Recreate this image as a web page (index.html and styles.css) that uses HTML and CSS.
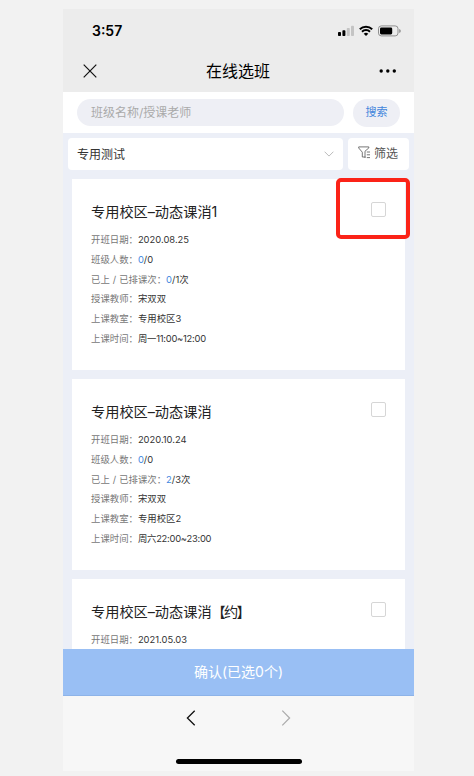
FILE: index.html
```
<!DOCTYPE html>
<html lang="zh-CN">

<head>
    <meta charset="UTF-8">
    <meta name="viewport" content="width=device-width, initial-scale=1.0">
    <title>在线选班</title>
    <link rel="stylesheet" href="styles.css">
</head>

<body>
    <div class="phone">
        <!-- 顶部状态栏和标题 -->
        <div class="header">
            <div class="status">
                <span class="time">3:57</span>
                <svg class="status-icons" width="64" height="12" viewBox="0 0 64 12">
                    <rect x="0" y="7" width="3" height="4" rx="0.8" fill="#000" />
                    <rect x="4.4" y="5.2" width="3" height="5.8" rx="0.8" fill="#000" />
                    <rect x="8.8" y="3" width="3" height="8" rx="0.8" fill="#c4c4c4" />
                    <rect x="13" y="0.8" width="3" height="10.2" rx="0.8" fill="#c4c4c4" />
                    <path d="M21.8 4.2a9 9 0 0 1 12.4 0M24 6.7a5.8 5.8 0 0 1 8 0" fill="none" stroke="#000" stroke-width="2" />
                    <path d="M25.7 8.8a3.4 3.4 0 0 1 4.6 0L28 11.1z" fill="#000" />
                    <rect x="40.5" y="0.9" width="19.5" height="10" rx="2.8" fill="none" stroke="#8f8f8f" />
                    <rect x="42" y="2.4" width="12.2" height="7" rx="1.3" fill="#000" />
                    <path d="M61.2 4v4q1.6-.6 1.6-2t-1.6-2z" fill="#8f8f8f" />
                </svg>
            </div>
            <div class="nav">
                <svg class="close" width="14" height="14" viewBox="0 0 14 14">
                    <path d="M.7.7l12.6 12.6M13.3.7L.7 13.3" stroke="#111" stroke-width="1.2" />
                </svg>
                <div class="nav-title">在线选班</div>
                <svg class="more" width="18" height="4" viewBox="0 0 18 4">
                    <circle cx="2.2" cy="2" r="1.7" />
                    <circle cx="8.8" cy="2" r="1.7" />
                    <circle cx="15.3" cy="2" r="1.7" />
                </svg>
            </div>
        </div>
        <!-- 搜索 -->
        <div class="search">
            <div class="search-input">班级名称/授课老师</div>
            <div class="search-btn">搜索</div>
        </div>
        <!-- 班级列表 -->
        <div class="main">
            <div class="filter">
                <div class="select">
                    <span>专用测试</span>
                    <svg width="10" height="6" viewBox="0 0 10 6">
                        <path d="M.6.7L5 5.1 9.4.7" fill="none" stroke="#bbb" />
                    </svg>
                </div>
                <div class="filter-btn">
                    <svg width="13" height="13" viewBox="0 0 13 13" fill="none" stroke="#666" stroke-width="0.9">
                        <path d="M7 5.2L10.8 2V.9H.7V2l3.6 4.2V11h3.2M7 5.2V12M8.8 6H12M8.8 8.8H12M8.8 11.6H12" />
                    </svg>
                    <span>筛选</span>
                </div>
            </div>
            <div class="card">
                <div class="card-title">专用校区–动态课消1<span class="check"></span></div>
                <div class="row"><label>开班日期：</label>2020.08.25</div>
                <div class="row"><label>班级人数：</label><i>0</i>/0</div>
                <div class="row"><label>已上 / 已排课次：</label><i>0</i>/1次</div>
                <div class="row"><label>授课教师：</label>宋双双</div>
                <div class="row"><label>上课教室：</label>专用校区3</div>
                <div class="row time-row"><label>上课时间：</label>周一11:00~12:00</div>
                <div class="mark"></div>
            </div>
            <div class="card">
                <div class="card-title">专用校区–动态课消<span class="check"></span></div>
                <div class="row"><label>开班日期：</label>2020.10.24</div>
                <div class="row"><label>班级人数：</label><i>0</i>/0</div>
                <div class="row"><label>已上 / 已排课次：</label><i>2</i>/3次</div>
                <div class="row"><label>授课教师：</label>宋双双</div>
                <div class="row"><label>上课教室：</label>专用校区2</div>
                <div class="row time-row"><label>上课时间：</label>周六22:00~23:00</div>
            </div>
            <div class="card">
                <div class="card-title"><div>专用校区–动态课消<span class="tag">【约】</span></div><span class="check"></span></div>
                <div class="row"><label>开班日期：</label>2021.05.03</div>
            </div>
        </div>
        <div class="confirm">确认(已选0个)</div>
        <!-- 底部导航 -->
        <div class="footer">
            <div class="arrows">
                <svg width="10" height="16" viewBox="0 0 10 16">
                    <path d="M8.7.7L1.4 8l7.3 7.3" fill="none" stroke="#111" stroke-width="1.3" />
                </svg>
                <svg width="10" height="16" viewBox="0 0 10 16">
                    <path d="M1.3.7L8.6 8l-7.3 7.3" fill="none" stroke="#aaa" stroke-width="1.2" />
                </svg>
            </div>
            <div class="home-bar"></div>
        </div>
    </div>
</body>

</html>
```
FILE: styles.css
```
* {
    margin: 0;
    padding: 0;
    box-sizing: border-box;
}

body {
    height: 776px;
    padding: 9px 60px 0 63px;
    background-color: #f2f2f2;
    font-family: Inter, "Noto Sans CJK SC", sans-serif;
    font-weight: 400;
    color: #333;
    overflow: hidden;
}

svg {
    display: block;
}

i {
    font-style: normal;
    color: #3f86e0;
}

.phone {
    display: flex;
    flex-direction: column;
    width: 351px;
    height: 762px;
}

.header {
    height: 83px;
    background-color: #ececec;
}

.status {
    display: flex;
    justify-content: space-between;
    align-items: center;
    height: 43px;
    padding: 0 12px 0 29px;
}

.time {
    font-size: 14px;
    font-weight: 600;
    color: #000;
}

.nav {
    display: flex;
    justify-content: space-between;
    align-items: center;
    height: 38px;
    padding: 0 17px 0 20px;
}

.nav-title {
    padding-bottom: 2px;
    font-size: 16px;
    color: #000;
}

.search {
    display: flex;
    align-items: center;
    justify-content: space-between;
    height: 41px;
    padding: 0 14px;
    background-color: #fff;
}

.search-input {
    width: 267px;
    height: 27px;
    padding-left: 14px;
    line-height: 27px;
    border-radius: 14px;
    background-color: #eeeff5;
    font-size: 12px;
    color: #aaa;
}

.search-btn {
    width: 47px;
    height: 28px;
    line-height: 27px;
    border-radius: 14px;
    background-color: #eeeff5;
    text-align: center;
    font-size: 11px;
    color: #4285dc;
}

.main {
    height: 516px;
    padding: 5px 9px 0;
    background-color: #eceff7;
    overflow: hidden;
}

.filter {
    display: flex;
    justify-content: space-between;
    height: 32px;
    margin: 0 -4px 9px;
}

.select {
    display: flex;
    align-items: center;
    justify-content: space-between;
    width: 275px;
    padding: 0 9px 1px;
    border-radius: 4px;
    background-color: #fff;
    font-size: 12px;
}

.filter-btn {
    display: flex;
    align-items: center;
    gap: 3px;
    width: 61px;
    padding: 0 0 4px 10px;
    border-radius: 4px;
    background-color: #fff;
    font-size: 12px;
    color: #555;
}

.card {
    position: relative;
    height: 191px;
    margin-bottom: 9px;
    padding: 20px 19px 0;
    background-color: #fff;
}

.card-title {
    display: flex;
    justify-content: space-between;
    height: 31px;
    line-height: 26px;
    font-size: 14.2px;
    color: #222;
}

.tag {
    letter-spacing: -1.8px;
}

.check {
    width: 15px;
    height: 15px;
    margin-top: 3px;
    border: 1px solid #d6d6d6;
    border-radius: 2px;
}

.row {
    height: 19.75px;
    line-height: 19.75px;
    font-size: 9.4px;
    word-spacing: 0.4px;
    white-space: nowrap;
}

.time-row {
    letter-spacing: -0.25px;
}

.row label {
    letter-spacing: 0;
    color: #777;
}

/* 勾选框外的红色标记 */
.mark {
    position: absolute;
    top: -1px;
    right: -5px;
    width: 74px;
    height: 61px;
    border: 4px solid #fb2318;
    border-radius: 5px;
}

.confirm {
    height: 47px;
    line-height: 46px;
    background-color: #99bff4;
    border-bottom: 1px solid #8db3e8;
    text-align: center;
    font-size: 14px;
    font-weight: 400;
    color: #fff;
}

.footer {
    height: 75px;
    padding-top: 14px;
    background-color: #f7f7f7;
}

.arrows {
    display: flex;
    justify-content: center;
    gap: 85px;
}

.home-bar {
    width: 126px;
    height: 5px;
    margin: 33px auto 0;
    border-radius: 3px;
    background-color: #000;
}
```
